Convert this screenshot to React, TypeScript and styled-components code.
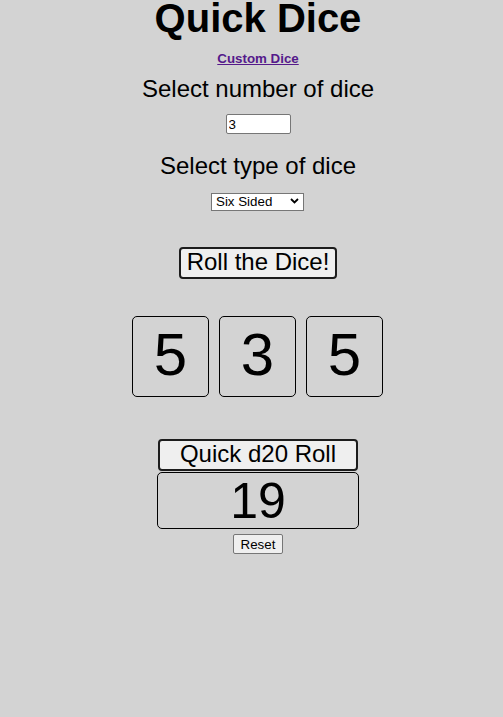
import React, { useState } from "react";
import styled, { createGlobalStyle } from "styled-components";

const GlobalStyle = createGlobalStyle`
  html, body {
    margin: 0;
    padding: 0;
    background: #d3d3d3;
  }
  body {
    font-family: "Liberation Sans", Arial, sans-serif;
    color: #000;
  }
`;

const Page = styled.div`
  display: flex;
  flex-direction: column;
  align-items: center;
  padding-left: 13px;
  min-height: 717px;
  box-sizing: border-box;
`;

const Title = styled.h1`
  margin: 0;
  font-size: 40px;
  font-weight: bold;
  line-height: 36px;
`;

const NavLink = styled.a`
  margin-top: 15px;
  font-size: 13.33px;
  font-weight: bold;
  line-height: 15px;
  color: #551a8b;
  text-decoration: underline;
`;

const Heading = styled.div<{ $gap: number }>`
  margin-top: ${(p) => p.$gap}px;
  font-size: 24px;
  line-height: 28px;
`;

const NumberInput = styled.input`
  margin-top: 11px;
  box-sizing: border-box;
  width: 65px;
  height: 20px;
  padding: 0 2px;
  border: 1px solid #767676;
  border-radius: 2px;
  background: #fff;
  font-family: "Liberation Sans", Arial, sans-serif;
  font-size: 13.33px;
  color: #000;
  outline: none;
`;

const SelectWrap = styled.div`
  position: relative;
  margin-top: 12px;
  margin-right: 1px;
  width: 93px;
  height: 18px;
`;

const Select = styled.select`
  appearance: none;
  -webkit-appearance: none;
  box-sizing: border-box;
  width: 93px;
  height: 18px;
  padding: 0 0 0 4px;
  border: 1px solid #767676;
  border-radius: 0;
  background: #fff;
  font-family: "Liberation Sans", Arial, sans-serif;
  font-size: 13.33px;
  line-height: 16px;
  color: #000;
  outline: none;
`;

const Chevron = styled.svg`
  position: absolute;
  right: 5px;
  top: 6px;
  width: 9px;
  height: 6px;
  pointer-events: none;
`;

const BigButton = styled.button<{ $gap: number; $width: number }>`
  margin-top: ${(p) => p.$gap}px;
  box-sizing: border-box;
  width: ${(p) => p.$width}px;
  height: 32px;
  padding: 0 0 2px;
  border: 2px solid #1c1c1c;
  border-radius: 4px;
  background: #efefef;
  font-family: "Liberation Sans", Arial, sans-serif;
  font-size: 24px;
  line-height: 26px;
  color: #000;
  cursor: pointer;
`;

const DiceRow = styled.div`
  margin-top: 37px;
  margin-right: 1px;
  display: flex;
  gap: 10px;
`;

const Die = styled.div`
  box-sizing: border-box;
  width: 77px;
  height: 81px;
  padding-top: 3px;
  border: 1px solid #000;
  border-radius: 5px;
  text-align: center;
  font-size: 60px;
  line-height: 69px;
`;

const ResultBox = styled.div`
  margin-top: 1px;
  box-sizing: border-box;
  width: 202px;
  height: 57px;
  border: 1px solid #000;
  border-radius: 5px;
  display: flex;
  align-items: center;
  justify-content: center;
  font-size: 50px;
  line-height: 50px;
`;

const SmallButton = styled.button`
  margin-top: 5px;
  box-sizing: border-box;
  width: 50px;
  height: 20px;
  padding: 0;
  border: 1px solid #767676;
  border-radius: 2px;
  background: #efefef;
  font-family: "Liberation Sans", Arial, sans-serif;
  font-size: 13.33px;
  color: #000;
  cursor: pointer;
`;

export default function App() {
  const [count, setCount] = useState("3");
  const [dice] = useState([5, 3, 5]);
  const [d20, setD20] = useState<number | "">(19);

  return (
    <>
      <GlobalStyle />
      <Page>
        <Title>Quick Dice</Title>
        <NavLink href="#custom">Custom Dice</NavLink>
        <Heading $gap={9}>Select number of dice</Heading>
        <NumberInput
          type="text"
          value={count}
          onChange={(e) => setCount(e.target.value)}
        />
        <Heading $gap={18}>Select type of dice</Heading>
        <SelectWrap>
          <Select defaultValue="6">
            <option value="4">Four Sided</option>
            <option value="6">Six Sided</option>
            <option value="8">Eight Sided</option>
            <option value="10">Ten Sided</option>
            <option value="12">Twelve Sided</option>
            <option value="20">Twenty Sided</option>
          </Select>
          <Chevron viewBox="0 0 9 6">
            <path
              d="M1 1 L4.5 4.5 L8 1"
              fill="none"
              stroke="#000"
              strokeWidth="1.8"
            />
          </Chevron>
        </SelectWrap>
        <BigButton $gap={37} $width={158}>
          Roll the Dice!
        </BigButton>
        <DiceRow>
          {dice.map((d, i) => (
            <Die key={i}>{d}</Die>
          ))}
        </DiceRow>
        <BigButton
          $gap={42}
          $width={200}
          onClick={() => setD20(Math.floor(Math.random() * 20) + 1)}
        >
          Quick d20 Roll
        </BigButton>
        <ResultBox>{d20}</ResultBox>
        <SmallButton onClick={() => setD20("")}>Reset</SmallButton>
      </Page>
    </>
  );
}
